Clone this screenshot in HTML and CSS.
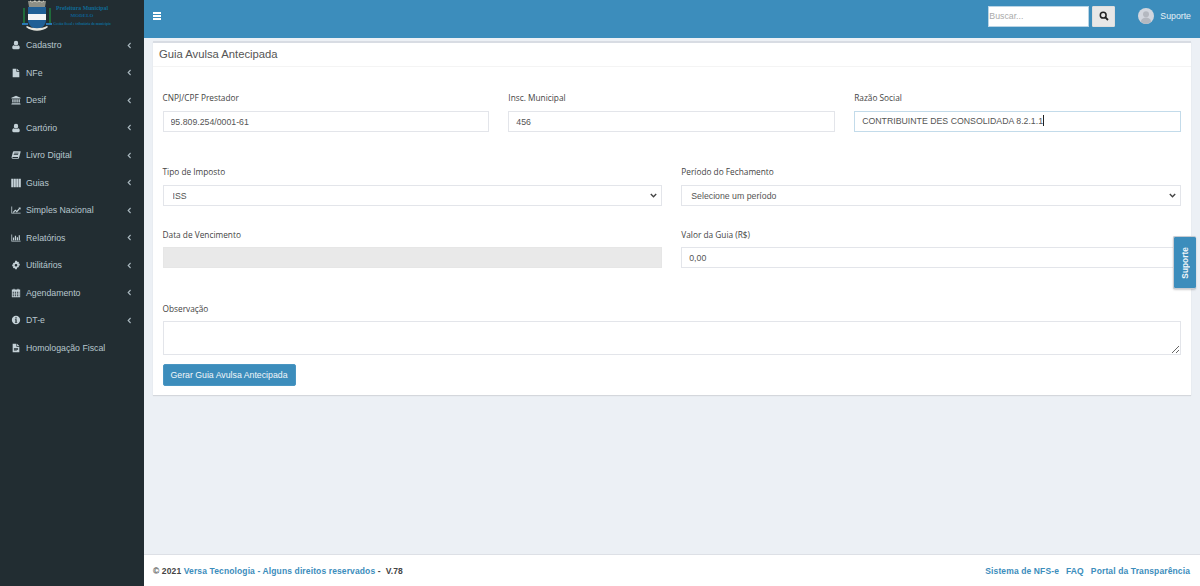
FILE: index.html
```html
<!DOCTYPE html>
<html lang="pt-BR">
<head>
<meta charset="utf-8">
<title>Guia Avulsa Antecipada</title>
<link rel="stylesheet" href="styles.css">
</head>
<body>
<svg class="defs" width="0" height="0" aria-hidden="true">
  <defs>
    <symbol id="i-user" viewBox="0 0 12 12"><path d="M6 1a2.600 2.600 0 0 1 2.600 2.800C8.600 5.400 7.500 6.600 6 6.600S3.400 5.400 3.400 3.800A2.600 2.600 0 0 1 6 1zM3.500 6.300C4.200 7 5 7.300 6 7.300s1.800-.3 2.500-1c1.400.1 2 1.400 2 3 0 1-.6 1.700-1.500 1.700H3c-.9 0-1.500-.7-1.500-1.700 0-1.600.6-2.900 2-3z"/></symbol>
    <symbol id="i-file" viewBox="0 0 12 12"><path d="M2 1h4.500v3.500H10V11H2zM7.300 1l2.700 2.700H7.300z"/></symbol>
    <symbol id="i-bank" viewBox="0 0 12 12"><path d="M6 1l5.500 2.400v.8H.5v-.8zM1.500 5h1.600v4H1.500zM4 5h1.600v4H4zM6.500 5h1.600v4H6.500zM9 5h1.600v4H9zM1 9.500h10v.8H1zM.5 10.600h11v.9H.5z"/></symbol>
    <symbol id="i-book" viewBox="0 0 12 12"><path d="M3.400 1.500h7.800c.4 0 .5.300.4.700L9.700 9.300c-.2.700-.6 1.200-1.400 1.200H2c-.9 0-1.500-.8-1.300-1.700L2.300 2.400c.1-.5.600-.9 1.100-.9zM3.900 3.300l-.2.800h5.200l.2-.8zM3.400 5.100l-.2.800h5.200l.2-.8zM2.300 8.300c-.5 0-.7.300-.7.600s.2.600.7.600h6l.3-1.200z" fill-rule="evenodd"/></symbol>
    <symbol id="i-cols" viewBox="0 0 12 12"><path d="M.3 .8h2.600v10.400H.3zM3.400 .8h2.400v10.400H3.400zM6.300 .8h2.400v10.400H6.300zM9.200 .8h2.600v10.400H9.200z"/></symbol>
    <symbol id="i-area" viewBox="0 0 13 12"><path d="M.5 1.500h1v8h11v1H.5zM2.500 8.500l3-3.300 2 1.800 3-3.500-1-.9h3v3l-.9-1-4 4.500-2-1.800-2 2.200z"/></symbol>
    <symbol id="i-bars" viewBox="0 0 13 12"><path d="M.5 1.500h1v8h11v1H.5zM2.500 5.500h1.600v3.500H2.500zM5 3h1.600v6H5zM7.500 5h1.600v4H7.500zM10 2.500h1.600v6.500H10z"/></symbol>
    <symbol id="i-cog" viewBox="0 0 12 12"><path fill-rule="evenodd" d="M5 1h2l.3 1.400 1-.5 1.300 1.200-.6 1.100 1.500.3v2l-1.500.3.600 1.100-1.300 1.300-1-.6L7 11H5l-.3-1.400-1 .6-1.400-1.300.6-1.100L1.500 7.500v-2l1.400-.3-.6-1.100 1.400-1.200 1 .5zM6 4.700a1.600 1.600 0 1 0 0 3.200 1.600 1.600 0 0 0 0-3.200z"/></symbol>
    <symbol id="i-cal" viewBox="0 0 12 12"><path fill-rule="evenodd" d="M3 .8h1.200v1h3.600v-1H9v1h2v9.400H1V1.800h2zM2 4.500v1.200h1.500V4.500zm2.500 0v1.200H6V4.500zm2.500 0v1.200h1.400V4.500zm2.200 0v1.200H10V4.500zM2 6.600v1.200h1.500V6.600zm2.500 0v1.200H6V6.600zm2.500 0v1.200h1.400V6.600zm2.200 0v1.200H10V6.600zM2 8.600v1.300h1.500V8.600zm2.500 0v1.300H6V8.600zm2.500 0v1.300h1.400V8.600zm2.200 0v1.300H10V8.600z"/></symbol>
    <symbol id="i-info" viewBox="0 0 12 12"><path fill-rule="evenodd" d="M6 1a5 5 0 1 1 0 10A5 5 0 0 1 6 1zM5.200 2.600v1.500h1.600V2.600zM4.700 5v1h.6v2.300h-.6v1h2.700v-1h-.6V5z"/></symbol>
    <symbol id="i-doc" viewBox="0 0 12 12"><path fill-rule="evenodd" d="M2 1h4.500v3.500H10V11H2zM7.300 1l2.700 2.700H7.300zM3.500 6v.8h5V6zm0 1.600v.8h5v-.8zm0 1.500v.6h3.500v-.6z"/></symbol>
    <symbol id="i-chev" viewBox="0 0 6 8"><path d="M4.300 1L1.400 4l2.900 3" fill="none" stroke="currentColor" stroke-width="1.300"/></symbol>
  </defs>
</svg>
<div class="app">
  <aside class="sidebar">
    <div class="logo">
      <svg class="crest" width="34" height="32" viewBox="0 0 34 32" aria-hidden="true">
        <path d="M8 1h18l-1 6H9z" fill="#8d8f86"/>
        <path d="M10 0l2 3 3-3 2 3 2-3 3 3 2-3v2H10z" fill="#c9c9bf"/>
        <path d="M4 8v17M30 8v17" stroke="#1f6b3a" stroke-width="2"/>
        <path d="M8 7h18v13c0 5-4 8-9 10-5-2-9-5-9-10z" fill="#1f5f96"/>
        <path d="M8 14h18v6H8z" fill="#f2f4f6"/>
        <path d="M2 23h6v2H2zM26 23h6v2h-6z" fill="#2a78b5"/>
        <path d="M6 27c6 5 16 5 22 0l-1-1c-6 3-14 3-20 0z" fill="#e6e6df"/>
      </svg>
      <div class="logo-text">
        <span class="logo-a">Prefeitura Municipal</span>
        <span class="logo-b">MODELO</span>
        <span class="logo-c">Gestão fiscal e tributária do município</span>
      </div>
    </div>
    <nav class="menu">
      <a class="item"><svg class="ico"><use href="#i-user"/></svg><span class="lbl">Cadastro</span><svg class="chev"><use href="#i-chev"/></svg></a>
      <a class="item"><svg class="ico"><use href="#i-file"/></svg><span class="lbl">NFe</span><svg class="chev"><use href="#i-chev"/></svg></a>
      <a class="item"><svg class="ico"><use href="#i-bank"/></svg><span class="lbl">Desif</span><svg class="chev"><use href="#i-chev"/></svg></a>
      <a class="item"><svg class="ico"><use href="#i-user"/></svg><span class="lbl">Cartório</span><svg class="chev"><use href="#i-chev"/></svg></a>
      <a class="item"><svg class="ico"><use href="#i-book"/></svg><span class="lbl">Livro Digital</span><svg class="chev"><use href="#i-chev"/></svg></a>
      <a class="item"><svg class="ico"><use href="#i-cols"/></svg><span class="lbl">Guias</span><svg class="chev"><use href="#i-chev"/></svg></a>
      <a class="item"><svg class="ico"><use href="#i-area"/></svg><span class="lbl">Simples Nacional</span><svg class="chev"><use href="#i-chev"/></svg></a>
      <a class="item"><svg class="ico"><use href="#i-bars"/></svg><span class="lbl">Relatórios</span><svg class="chev"><use href="#i-chev"/></svg></a>
      <a class="item"><svg class="ico"><use href="#i-cog"/></svg><span class="lbl">Utilitários</span><svg class="chev"><use href="#i-chev"/></svg></a>
      <a class="item"><svg class="ico"><use href="#i-cal"/></svg><span class="lbl">Agendamento</span><svg class="chev"><use href="#i-chev"/></svg></a>
      <a class="item"><svg class="ico"><use href="#i-info"/></svg><span class="lbl">DT-e</span><svg class="chev"><use href="#i-chev"/></svg></a>
      <a class="item"><svg class="ico"><use href="#i-doc"/></svg><span class="lbl">Homologação Fiscal</span></a>
    </nav>
  </aside>
  <div class="main">
    <header class="topbar">
      <span class="burger"><i></i><i></i><i></i></span>
      <div class="top-right">
        <input class="search" type="text" placeholder="Buscar...">
        <button class="search-btn" type="button" aria-label="Buscar">
          <svg width="10" height="10" viewBox="0 0 10 10"><circle cx="4.200" cy="4.200" r="2.900" fill="none" stroke="#222" stroke-width="1.500"/><path d="M6.400 6.400L9 9" stroke="#222" stroke-width="1.800"/></svg>
        </button>
        <svg class="avatar" width="16" height="16" viewBox="0 0 16 16"><circle cx="8" cy="8" r="8" fill="#d2d6de"/><circle cx="8" cy="6.300" r="3" fill="#b4b8c0"/><path d="M2.800 13.500c.8-3 2.800-4 5.200-4s4.400 1 5.200 4A8 8 0 0 1 8 16a8 8 0 0 1-5.200-2.500z" fill="#b4b8c0"/></svg>
        <span class="user">Suporte</span>
      </div>
    </header>
    <main class="content">
      <section class="card">
        <h1 class="card-title">Guia Avulsa Antecipada</h1>
        <form class="form">
          <div class="row row-3">
            <div class="field"><label>CNPJ/CPF Prestador</label><input class="ctl" type="text" value="95.809.254/0001-61"></div>
            <div class="field"><label>Insc. Municipal</label><input class="ctl" type="text" value="456"></div>
            <div class="field"><label>Razão Social</label><div class="ctl focus">CONTRIBUINTE DES CONSOLIDADA 8.2.1.1<span class="caret"></span></div></div>
          </div>
          <div class="row row-2 gap-a">
            <div class="field"><label>Tipo de Imposto</label><select class="ctl"><option>ISS</option></select></div>
            <div class="field"><label>Período do Fechamento</label><select class="ctl"><option>Selecione um período</option></select></div>
          </div>
          <div class="row row-2 gap-b">
            <div class="field"><label>Data de Vencimento</label><input class="ctl" type="text" disabled></div>
            <div class="field"><label>Valor da Guia (R$)</label><input class="ctl" type="text" value="0,00"></div>
          </div>
          <div class="field gap-c"><label>Observação</label><textarea class="ctl area"></textarea></div>
          <button class="submit" type="button">Gerar Guia Avulsa Antecipada</button>
        </form>
      </section>
    </main>
    <footer class="footer">
      <div class="copy"><b>© 2021</b> <a>Versa Tecnologia</a> <a>- Alguns direitos reservados</a> <b>-&nbsp; V.78</b></div>
      <div class="links"><a>Sistema de NFS-e</a><a>FAQ</a><a>Portal da Transparência</a></div>
    </footer>
  </div>
</div>
<div class="support-tab"><span>Suporte</span></div>
</body>
</html>
```
FILE: styles.css
```css
* { box-sizing: border-box; }
html, body { margin: 0; height: 100%; overflow: hidden; }
body { font-family: "Liberation Sans", Arial, sans-serif; font-size: 8.750px; color: #333; background: #ecf0f5; }
.defs { display: block; height: 0; }
.app { display: flex; height: 586px; }

.sidebar { width: 144px; flex: none; background: #222d32; }
.logo { height: 31.500px; display: flex; overflow: hidden; padding-left: 20px; }
.crest { flex: none; }
.logo-text { display: flex; flex-direction: column; align-items: center; width: 52px; margin-left: 2px; color: #0f6a96; font-family: "Liberation Serif", serif; font-weight: 700; }
.logo-a { font-size: 5.800px; line-height: 7px; margin-top: 5px; white-space: nowrap; }
.logo-b { font-size: 5px; line-height: 7px; margin-top: 0; color: #0d5f92; }
.logo-c { font-size: 3.500px; line-height: 4px; margin-top: 3px; white-space: nowrap; }
.menu { display: flex; flex-direction: column; }
.item { height: 27.500px; display: flex; align-items: center; padding: 0 12px 0 11px; color: #b8c7ce; font-size: 8.750px; }
.ico { width: 10px; height: 10px; fill: #c4d1d7; flex: none; margin-right: 5px; }
.lbl { flex: 1; white-space: nowrap; }
.chev { width: 5px; height: 7px; flex: none; color: #aab8bf; }

.main { flex: 1; min-width: 0; display: flex; flex-direction: column; }
.topbar { height: 38px; flex: none; background: #3c8dbc; display: flex; align-items: center; justify-content: space-between; padding: 0 9px 6px 9px; }
.burger { display: flex; flex-direction: column; gap: 1.500px; width: 8px; }
.burger i { display: block; height: 1.500px; background: #fff; }
.top-right { display: flex; align-items: center; }
.search { width: 101px; height: 21px; border: 1px solid #b9d4e5; background: #fff; padding: 0; font: 8.750px "Liberation Sans", sans-serif; }
.search::placeholder { color: #aaa; opacity: 1; }
.search-btn { width: 23px; height: 21px; margin-left: 3px; border: 1px solid #ddd; border-radius: 1px; background: #e7e7e7; padding: 0; display: flex; align-items: center; justify-content: center; }
.avatar { margin-left: 23px; }
.user { margin-left: 6px; color: #e4eff6; font-size: 8.750px; }

.content { flex: 1; padding: 3px 9px 0; }
.card { height: 354px; width: 1038px; background: #fff; border-top: 2px solid #d8dce3; box-shadow: 0 1px 1px rgba(0,0,0,.1); display: flex; flex-direction: column; }
.card-title { margin: 0; height: 24px; padding: 0 6px; font-size: 11.250px; font-weight: 400; line-height: 22px; color: #555; border-bottom: 1px solid #f4f4f4; }
.form { padding: 23px 10px 0 9.500px; display: flex; flex-direction: column; }
.row { display: grid; column-gap: 19px; }
.row-3 { grid-template-columns: repeat(3, 1fr); }
.row-2 { grid-template-columns: repeat(2, 1fr); }
.gap-a { margin-top: 32px; }
.gap-b { margin-top: 20px; }
.gap-c { margin-top: 32px; }
.gap-b label, .gap-c label { padding-top: 1px; }
.field { display: flex; flex-direction: column; min-width: 0; }
.field label { height: 16px; margin-bottom: 5px; line-height: 16px; font-family: "Open Sans", sans-serif; font-size: 8.300px; font-weight: 400; color: #444; }
.ctl { width: 100%; height: 21px; border: 1px solid #e3e5ea; background: #fff; color: #555; padding: 0 7px; font: 8.750px/19px "Liberation Sans", sans-serif; border-radius: 0; outline: 0; }
select.ctl { padding: 1px 20px 0 9px; appearance: none; -webkit-appearance: none; background: #fff url("data:image/svg+xml,%3Csvg xmlns='http://www.w3.org/2000/svg' width='7' height='5'%3E%3Cpath d='M.8 1l2.700 2.700L6.200 1' fill='none' stroke='%23444' stroke-width='1.400'/%3E%3C/svg%3E") no-repeat right 4px center; }
.ctl:disabled { background: #e9e9e9; border-color: #e6e6e6; }
.focus { border-color: #c3dbea; white-space: nowrap; }
.caret { display: inline-block; width: 1px; height: 11px; background: #222; vertical-align: -2px; }
.area { height: 34px; display: block; padding: 3px 7px; resize: vertical; }
.submit { margin-top: 9px; width: 133px; height: 22px; padding: 0; background: #3c8dbc; color: #f2f7fa; border: 1px solid #4a96c2; border-radius: 2px; font: 8.750px "Liberation Sans", sans-serif; }

.footer { height: 32px; flex: none; background: #fff; border-top: 1px solid #dde0e6; display: flex; align-items: center; justify-content: space-between; padding: 0 10px 0 9px; font-size: 8.500px; font-weight: 700; letter-spacing: .12px; color: #444; }
.footer a { color: #3c8dbc; }
.links { display: flex; gap: 7px; }

.support-tab { position: absolute; left: 1173px; top: 236px; width: 23px; height: 53px; background: #3c8dbc; border: 1px solid #c8ccd2; border-right: 0; border-radius: 2px; display: flex; align-items: center; justify-content: center; box-shadow: 0 1px 2px rgba(0,0,0,.2); }
.support-tab span { writing-mode: vertical-rl; transform: rotate(180deg); color: #f2f6f9; font-size: 8.200px; font-weight: 700; letter-spacing: .1px; }
```
